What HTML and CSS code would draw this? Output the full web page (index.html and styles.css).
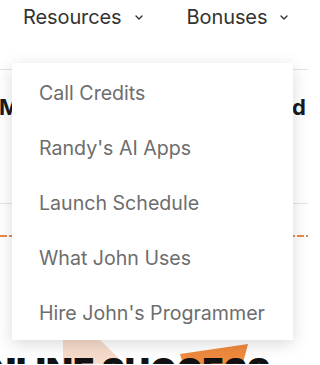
FILE: index.html
```html
<!DOCTYPE html>
<html>
<head>
<meta charset="utf-8">
<link rel="stylesheet" href="styles.css">
</head>
<body>
<header class="nav">
  <div class="nav-item">Resources
    <svg class="chev" viewBox="0 0 8 5" width="8" height="5"><path d="M1 1 L4 4 L7 1" fill="none" stroke="#333" stroke-width="1.4" stroke-linecap="round" stroke-linejoin="round"/></svg>
  </div>
  <div class="nav-item">Bonuses
    <svg class="chev" viewBox="0 0 8 5" width="8" height="5"><path d="M1 1 L4 4 L7 1" fill="none" stroke="#333" stroke-width="1.4" stroke-linecap="round" stroke-linejoin="round"/></svg>
  </div>
</header>

<main class="page">
  <div class="subnav">
    <span class="sub-left">Members</span>
    <span class="sub-right">Featured</span>
  </div>
  <div class="divider"></div>
  <div class="dashes"></div>
  <section class="hero">
    <svg class="hero-bg" viewBox="0 0 308 40" width="308" height="40">
      <polygon points="63,6 100,6 135,40 63,40" fill="#f7dccb"/>
      <polygon points="180,20 248,10 240,40 186,40" fill="#ef8a3d"/>
    </svg>
    <h1 class="hero-title">ONLINE SUCCESS</h1>
  </section>
</main>

<div class="dropdown">
  <a class="dd-item">Call Credits</a>
  <a class="dd-item">Randy's AI Apps</a>
  <a class="dd-item">Launch Schedule</a>
  <a class="dd-item">What John Uses</a>
  <a class="dd-item">Hire John's Programmer</a>
</div>
</body>
</html>
```

FILE: styles.css
```css
html, body {
  margin: 0;
  padding: 0;
  background: #ffffff;
  overflow: hidden;
  width: 308px;
  height: 365px;
}
body {
  font-family: "Inter", "Noto Sans", sans-serif;
  position: relative;
}
.nav {
  display: flex;
  align-items: center;
  gap: 44px;
  padding: 3px 0 0 23px;
  height: 27px;
}
.nav-item {
  display: flex;
  align-items: center;
  gap: 13px;
  font-size: 20px;
  font-weight: 400;
  color: #333333;
  letter-spacing: -0.1px;
}
.chev {
  display: block;
  margin-top: 1px;
}
.page {
  padding-top: 39px;
}
.subnav {
  border-top: 1px solid #e3e3e3;
  display: flex;
  justify-content: space-between;
  height: 133px;
  overflow: hidden;
}
.sub-left, .sub-right {
  font-size: 22px;
  font-weight: 700;
  color: #1a1a1a;
  margin-top: 24px;
}
.sub-left {
  margin-left: -1px;
}
.sub-right {
  margin-right: 2px;
}
.divider {
  height: 1px;
  background: #e6e6e6;
}
.dashes {
  margin-top: 31px;
  height: 2px;
  background: repeating-linear-gradient(90deg, #e8894a 0 7px, transparent 7px 9px);
}
.hero {
  position: relative;
  margin-top: 96px;
  height: 31px;
  overflow: hidden;
}
.hero-bg {
  position: absolute;
  left: 0;
  top: 1px;
}
.hero-title {
  position: relative;
  margin: 0;
  padding-top: 21px;
  font-family: "Inter", "Liberation Sans", sans-serif;
  font-weight: 900;
  font-size: 35px;
  line-height: 1;
  color: #111111;
  white-space: nowrap;
  margin-left: -38px;
}
.dropdown {
  position: absolute;
  left: 12px;
  top: 63px;
  width: 281px;
  height: 277px;
  box-sizing: border-box;
  padding: 3px 0 0 27px;
  background: #ffffff;
  box-shadow: 0 4px 16px rgba(0, 0, 0, 0.15);
  display: flex;
  flex-direction: column;
}
.dd-item {
  display: block;
  height: 55px;
  line-height: 55px;
  font-size: 19.6px;
  color: #6d6d6d;
  letter-spacing: 0;
  white-space: nowrap;
}
```
